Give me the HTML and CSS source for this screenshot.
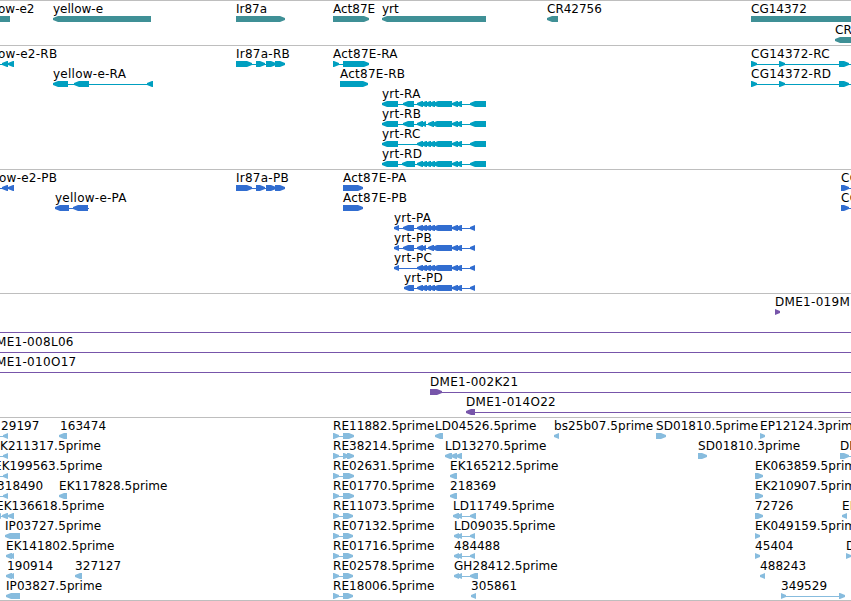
FILE: index.html
```
<!DOCTYPE html>
<html lang="en">
<head>
    <meta charset="UTF-8">
    <title>Genome Browser</title>
    <link rel="stylesheet" href="styles.css">
</head>
<body>
    <div class="browser">
        <div class="track gene" id="gene"></div>
        <div class="track transcript" id="transcript"></div>
        <div class="track protein" id="protein"></div>
        <div class="track bac" id="bac"></div>
        <div class="track est" id="est"></div>
    </div>
    <script src="script.js"></script>
</body>
</html>
```
FILE: styles.css
```
body {
    margin: 0;
    background: #ffffff;
    overflow: hidden;
}

.browser {
    display: grid;
    grid-template-rows: 45px 124px 124px 124px 183px;
    width: 851px;
    height: 600px;
    border-bottom: 1px solid #bebebe;
    overflow: hidden;
    font-family: "DejaVu Sans", sans-serif;
    font-size: 12px;
    color: #000000;
}

.track {
    border-top: 1px solid #bebebe;
    overflow: hidden;
}

.row {
    position: relative;
    height: 20px;
}

.gene .row {
    height: 21px;
}

/* features sit at their base position along the sequence */
.label {
    position: absolute;
    top: 0;
    line-height: 17px;
    white-space: nowrap;
}

.glyphs {
    display: block;
    width: 851px;
    height: 6px;
    padding-top: 15px;
}

.gene {
    fill: #3f9096;
}

.transcript {
    fill: #009fc0;
    letter-spacing: 0.25px;
}

.protein {
    fill: #316dd0;
    letter-spacing: 0.25px;
}

.bac {
    fill: #7755aa;
    letter-spacing: 0.3px;
}

.est {
    fill: #87bcde;
    letter-spacing: 0.06px;
}
```
FILE: script.js
```
// each feature: [label, label x, parts]
// parts: "<a:b" reverse exon, ">a:b" forward exon, "=a:b" plain block, "-a:b" intron line
const yrtMid = "<417:423 <421:427 <425:431 <429:435 <433:452 <452:458 <456:462";
const yrtMidB = "<417:423 <421:426 <428:434 <432:452 <452:458 <456:462";

const tracks = {
    gene: [
        [["ow-e2", -2, "=0:10"], ["yellow-e", 53, "<53:151"], ["Ir87a", 236, ">236:285"], ["Act87E", 333, ">333:369"],
         ["yrt", 382, "<382:486"], ["CR42756", 547, "<547:558"], ["CG14372", 751, "=751:851"]],
        [["CR", 835, "<835:861"]]
    ],
    transcript: [
        [["ow-e2-RB", -2, "-0:14 <2:8 <8:14"], ["Ir87a-RB", 236, "-236:285 >236:252 >256:265 >266:276 >275:285"],
         ["Act87E-RA", 333, "-333:369 >333:339 >343:369"], ["CG14372-RC", 751, "-751:851 >751:757 >779:785 >839:849"]],
        [["yellow-e-RA", 53, "-53:153 <53:68 <74:89 <147:153"], ["Act87E-RB", 340, ">340:368"],
         ["CG14372-RD", 751, "-751:851 >751:757 >779:785 >839:849"]],
        [["yrt-RA", 382, "-382:486 <382:398 <403:414 " + yrtMid + " <470:486"]],
        [["yrt-RB", 382, "-382:486 <382:398 <403:414 " + yrtMidB + " <470:486"]],
        [["yrt-RC", 382, "-382:486 <382:398 " + yrtMid + " <470:486"]],
        [["yrt-RD", 382, "-382:486 <382:398 <402:415 " + yrtMid + " <470:486"]]
    ],
    protein: [
        [["ow-e2-PB", -1, "-0:14 <2:8 <8:14"], ["Ir87a-PB", 236, "-236:285 >236:252 >256:265 >266:276 >275:285"],
         ["Act87E-PA", 343, ">343:363"], ["CG", 841, "-841:851 >841:849"]],
        [["yellow-e-PA", 55, "-55:89 <55:69 <73:88"], ["Act87E-PB", 343, ">343:363"], ["CG", 841, "-841:851 >841:849"]],
        [["yrt-PA", 394, "-394:475 <394:399 <403:414 " + yrtMid + " <470:475"]],
        [["yrt-PB", 394, "-394:475 <394:399 <403:414 " + yrtMidB + " <470:475"]],
        [["yrt-PC", 394, "-394:475 <394:399 " + yrtMid + " <470:475"]],
        [["yrt-PD", 404, "-404:475 <404:414 " + yrtMid + " <470:475"]]
    ],
    bac: [
        [["DME1-019M", 775, ">775:780"]],
        [["", 0, "-0:851"]],
        [["ME1-008L06", -4, "-0:851"]],
        [["ME1-010O17", -4, "-0:851"]],
        [["DME1-002K21", 430, "-430:851 >430:442"]],
        [["DME1-014O22", 466, "-466:851 <466:475"]]
    ],
    est: [
        [["29197", 1, "-0:8 <3:8"], ["163474", 60, "<59:67"], ["RE11882.5prime", 333, "-333:354 >333:339 >343:354"],
         ["LD04526.5prime", 435, "<435:443"], ["bs25b07.5prime", 554, "<554:559"], ["SD01810.5prime", 656, ">656:666"],
         ["EP12124.3prime", 760, ">760:765"]],
        [["K211317.5prime", 0, "-0:8 <3:8"], ["RE38214.5prime", 333, "-333:354 >333:339 >343:349 >347:354"],
         ["LD13270.5prime", 445, "<445:452 <451:457 <456:462"], ["SD01810.3prime", 698, ">698:707"], ["DM", 840, "-840:851 >840:849"]],
        [["EK199563.5prime", -6, "-0:8 <3:8"], ["RE02631.5prime", 333, "-333:354 >333:339 >343:354"],
         ["EK165212.5prime", 450, "<450:457"], ["EK063859.5prime", 755, ">755:763"]],
        [["318490", -3, "-0:8 <3:8"], ["EK117828.5prime", 59, "<59:67"], ["RE01770.5prime", 333, "-333:354 >333:339 >343:354"],
         ["218369", 450, "<450:457"], ["EK210907.5prime", 755, ">755:763"]],
        [["EK136618.5prime", -4, "-0:14 <-4:1 <2:8 <8:14"], ["RE11073.5prime", 333, "-333:353 >333:339 >343:353"],
         ["LD11749.5prime", 453, "-453:476 <453:459 <457:462 <470:476"], ["72726", 755, ">755:763"], ["EK", 842, "<842:847"]],
        [["IP03727.5prime", 5, "<5:20"], ["RE07132.5prime", 333, "-333:353 >333:339 >343:353"],
         ["LD09035.5prime", 454, "-454:475 <454:459 <457:462 <470:475"], ["EK049159.5prime", 755, ">755:760"]],
        [["EK141802.5prime", 6, "<6:12 <9:14"], ["RE01716.5prime", 333, "-333:353 >333:339 >343:353"],
         ["484488", 454, "-454:475 <454:459 <457:462 <470:475"], ["45404", 755, ">755:760"], ["D", 846, ">846:851"]],
        [["190914", 7, "<6:12 <9:14"], ["327127", 75, "<75:82"], ["RE02578.5prime", 333, "-333:353 >333:339 >343:353"],
         ["GH28412.5prime", 454, "-454:478 <454:459 <457:462 <470:478"], ["488243", 760, "<760:765"]],
        [["IP03827.5prime", 6, "<6:20"], ["RE18006.5prime", 333, "-333:353 >333:339 >343:353"],
         ["305861", 471, "<471:476"], ["349529", 781, "-781:845 >781:786 >839:845"]]
    ]
};

function drawPart(part) {
    const type = part[0];
    const [a, b] = part.slice(1).split(":").map(Number);
    const tip = Math.min(5, b - a);
    // arrow tips are blunt, 2px high
    if (type == "<") {
        return `<polygon points="${a},2 ${a + tip},0 ${b},0 ${b},6 ${a + tip},6 ${a},4"/>`;
    }
    if (type == ">") {
        return `<polygon points="${a},0 ${b - tip},0 ${b},2 ${b},4 ${b - tip},6 ${a},6"/>`;
    }
    if (type == "=") {
        return `<rect x="${a}" y="0" width="${b - a}" height="6"/>`;
    }
    return `<rect x="${a}" y="3" width="${b - a}" height="1"/>`;
}

for (const id in tracks) {
    let html = "";
    for (const row of tracks[id]) {
        let labels = "";
        let shapes = "";
        for (const [name, x, parts] of row) {
            if (name) {
                labels += `<span class="label" style="left:${x}px">${name}</span>`;
            }
            shapes += parts.split(" ").map(drawPart).join("");
        }
        html += `<div class="row">${labels}<svg class="glyphs" viewBox="0 0 851 6">${shapes}</svg></div>`;
    }
    document.getElementById(id).innerHTML = html;
}
```
